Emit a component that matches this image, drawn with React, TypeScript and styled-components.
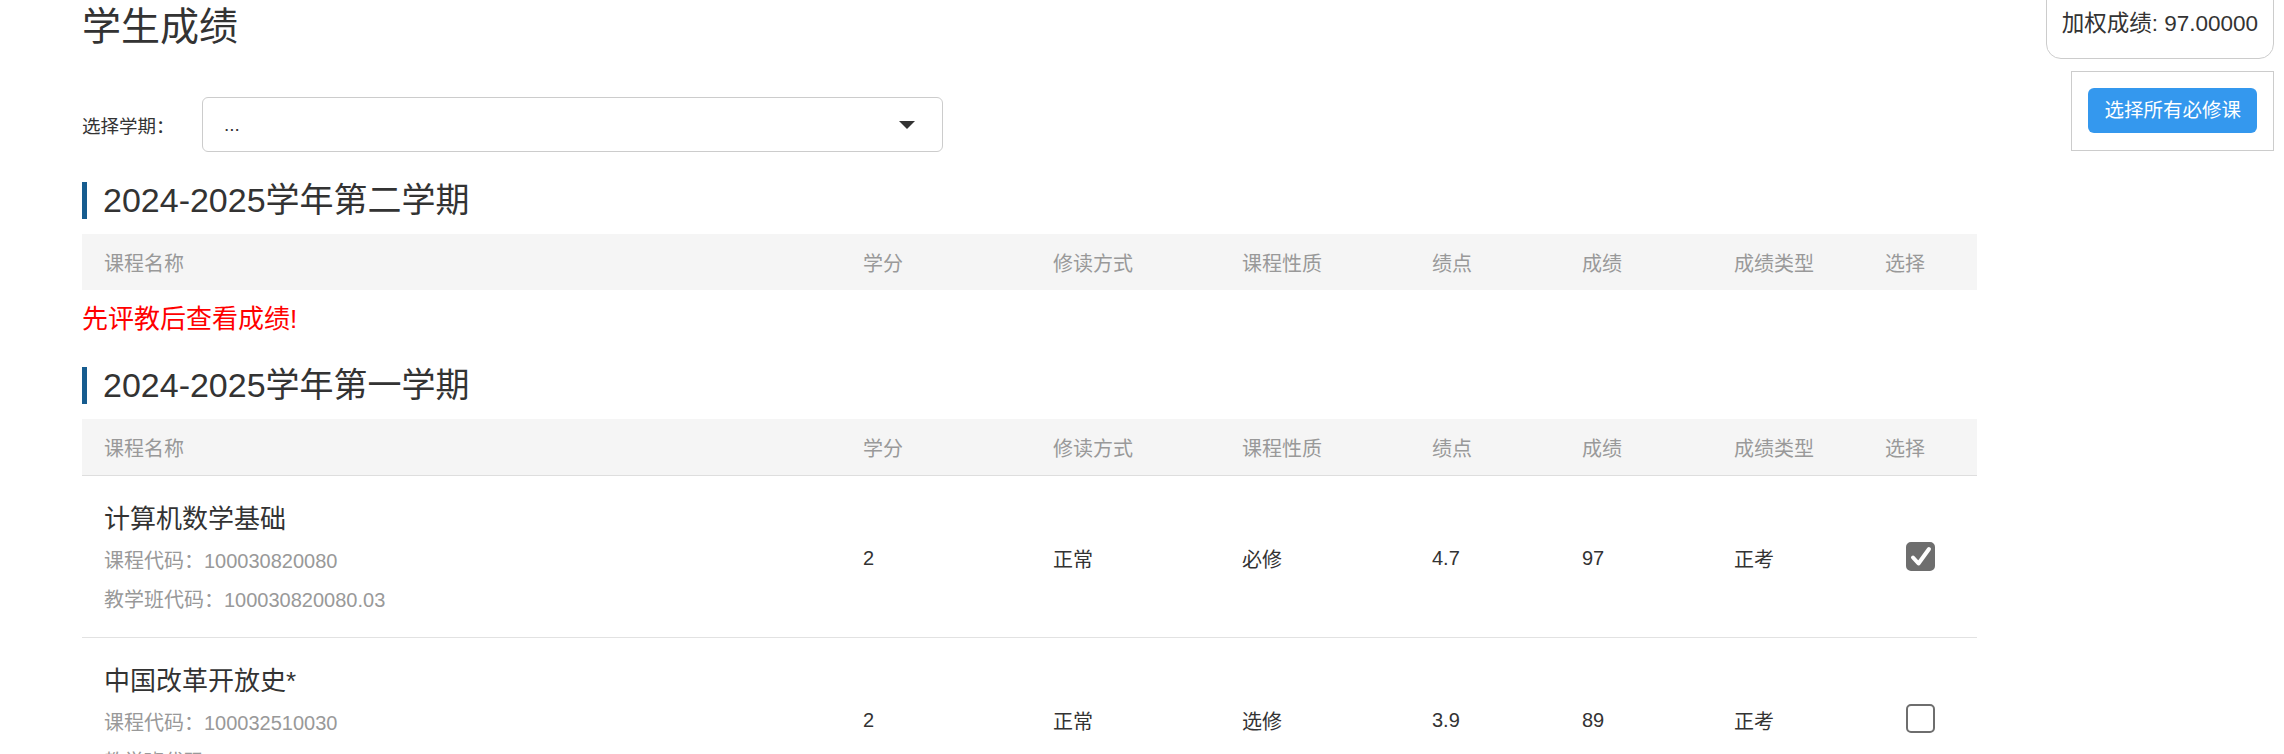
import React from "react";
import styled, { createGlobalStyle } from "styled-components";

const GlobalStyle = createGlobalStyle`
  html, body {
    margin: 0;
    padding: 0;
    background: #ffffff;
  }
  body {
    font-family: "Liberation Sans", "Noto Sans CJK SC", sans-serif;
    color: #333;
  }
`;

const Page = styled.div`
  padding-left: 82px;
  width: 1895px;
`;

const Title = styled.h1`
  margin: 0;
  padding-top: 4px;
  font-size: 39px;
  line-height: 46px;
  font-weight: normal;
  color: #333;
`;

const TermPicker = styled.div`
  display: flex;
  align-items: center;
  margin-top: 47px;
`;

const PickerLabel = styled.label`
  width: 120px;
  font-size: 18.5px;
  color: #333;
`;

const SelectBox = styled.div`
  box-sizing: border-box;
  width: 741px;
  height: 55px;
  border: 1px solid #ccc;
  border-radius: 6px;
  display: flex;
  align-items: center;
  justify-content: space-between;
  padding: 0 27px 0 21px;
  font-size: 19px;
  color: #333;
`;

const Caret = styled.span`
  width: 0;
  height: 0;
  border-left: 8px solid transparent;
  border-right: 8px solid transparent;
  border-top: 8px solid #333;
`;

const Section = styled.section<{ $gap: number }>`
  margin-top: ${p => p.$gap}px;
`;

const SectionTitle = styled.h2`
  margin: 0 0 15px;
  border-left: 5px solid #165c8f;
  padding-left: 16px;
  font-size: 34px;
  line-height: 37px;
  font-weight: normal;
  color: #333;
`;

const COLUMNS = "759px 190px 189px 190px 150px 152px 151px 114px";

const HeaderRow = styled.div<{ $divider?: boolean }>`
  display: grid;
  grid-template-columns: ${COLUMNS};
  height: 56px;
  align-items: center;
  background: #f5f5f5;
  color: #999;
  font-size: 20px;
  border-bottom: ${p => (p.$divider ? "1px solid #dedede" : "none")};
`;

const HeadCell = styled.div`
  padding-left: 22px;
`;

const Row = styled.div`
  display: grid;
  grid-template-columns: ${COLUMNS};
  align-items: center;
  padding: 20px 0 17px;
  border-bottom: 1px solid #e2e2e2;
  font-size: 20px;
  color: #333;
`;

const Cell = styled.div<{ $center?: boolean }>`
  padding-left: ${p => (p.$center ? "0" : "22px")};
  display: ${p => (p.$center ? "flex" : "block")};
  justify-content: center;
`;

const CourseName = styled.div`
  font-size: 26px;
  line-height: 46px;
  color: #333;
`;

const CourseMeta = styled.div`
  font-size: 20px;
  line-height: 39px;
  color: #999;
`;

const Notice = styled.div`
  margin-top: 10px;
  font-size: 26px;
  line-height: 39px;
  color: #ff0000;
`;

const Checkbox = styled.span<{ $checked?: boolean }>`
  box-sizing: border-box;
  width: 29px;
  height: 29px;
  margin-top: -3px;
  border-radius: 5px;
  display: flex;
  align-items: center;
  justify-content: center;
  background: ${p => (p.$checked ? "#6e6e6e" : "#ffffff")};
  border: 2px solid #6e6e6e;
`;

const WeightBox = styled.div`
  position: fixed;
  top: -20px;
  right: 10px;
  padding: 26px 15px 18px;
  border: 1px solid #ccc;
  border-radius: 15px;
  background: #fff;
  font-size: 22.5px;
  line-height: 33px;
  color: #333;
`;

const ActionBox = styled.div`
  position: fixed;
  top: 71px;
  right: 10px;
  padding: 16px 16px 17px;
  border: 1px solid #ccc;
  background: #fff;
`;

const PrimaryButton = styled.button`
  display: block;
  height: 45px;
  padding: 0 16px;
  border: none;
  border-radius: 6px;
  background: #3498ee;
  color: #fff;
  font-family: inherit;
  font-size: 19.5px;
  line-height: 45px;
  cursor: pointer;
`;

const HEADERS = ["课程名称", "学分", "修读方式", "课程性质", "绩点", "成绩", "成绩类型", "选择"];

type Course = {
  name: string;
  code: string;
  classCode: string;
  credit: string;
  mode: string;
  kind: string;
  gpa: string;
  score: string;
  examType: string;
  checked: boolean;
};

const COURSES: Course[] = [
  {
    name: "计算机数学基础",
    code: "100030820080",
    classCode: "100030820080.03",
    credit: "2",
    mode: "正常",
    kind: "必修",
    gpa: "4.7",
    score: "97",
    examType: "正考",
    checked: true,
  },
  {
    name: "中国改革开放史*",
    code: "100032510030",
    classCode: "100032510030.05",
    credit: "2",
    mode: "正常",
    kind: "选修",
    gpa: "3.9",
    score: "89",
    examType: "正考",
    checked: false,
  },
];

function Header({ divider }: { divider?: boolean }) {
  return (
    <HeaderRow $divider={divider}>
      {HEADERS.map(h => (
        <HeadCell key={h}>{h}</HeadCell>
      ))}
    </HeaderRow>
  );
}

export default function App() {
  return (
    <>
      <GlobalStyle />
      <Page>
        <Title>学生成绩</Title>
        <TermPicker>
          <PickerLabel>选择学期：</PickerLabel>
          <SelectBox>
            <span>...</span>
            <Caret />
          </SelectBox>
        </TermPicker>

        <Section $gap={30}>
          <SectionTitle>2024-2025学年第二学期</SectionTitle>
          <Header />
          <Notice>先评教后查看成绩!</Notice>
        </Section>

        <Section $gap={28}>
          <SectionTitle>2024-2025学年第一学期</SectionTitle>
          <Header divider />
          {COURSES.map(c => (
            <Row key={c.code}>
              <Cell>
                <CourseName>{c.name}</CourseName>
                <CourseMeta>课程代码：{c.code}</CourseMeta>
                <CourseMeta>教学班代码：{c.classCode}</CourseMeta>
              </Cell>
              <Cell>{c.credit}</Cell>
              <Cell>{c.mode}</Cell>
              <Cell>{c.kind}</Cell>
              <Cell>{c.gpa}</Cell>
              <Cell>{c.score}</Cell>
              <Cell>{c.examType}</Cell>
              <Cell $center>
                <Checkbox $checked={c.checked}>
                  {c.checked && (
                    <svg width="25" height="25" viewBox="0 0 25 25">
                      <path
                        d="M5 13.5 L10.5 19.5 L21 5"
                        fill="none"
                        stroke="#fff"
                        strokeWidth="4"
                        strokeLinecap="round"
                        strokeLinejoin="round"
                      />
                    </svg>
                  )}
                </Checkbox>
              </Cell>
            </Row>
          ))}
        </Section>
      </Page>

      <WeightBox>加权成绩: 97.00000</WeightBox>
      <ActionBox>
        <PrimaryButton>选择所有必修课</PrimaryButton>
      </ActionBox>
    </>
  );
}
